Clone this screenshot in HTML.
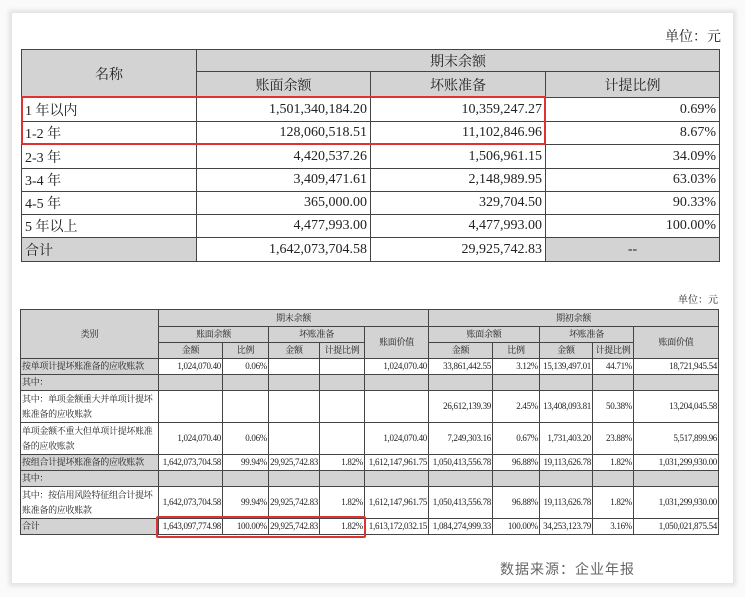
<!DOCTYPE html>
<html><head><meta charset="utf-8"><style>
html,body{margin:0;padding:0;width:745px;height:597px;background:#fafafa;overflow:hidden}
.card{position:absolute;left:12px;top:13px;width:721px;height:570px;background:#fff;box-shadow:0 0 4px 3px #e2e2e2}
.f{font-family:"Liberation Serif","Noto Serif CJK SC",serif;color:#222}
table{position:absolute;border-collapse:collapse;table-layout:fixed}
td{border:1px solid #444;padding:0 3px;white-space:nowrap;overflow:hidden;box-sizing:border-box}
.g{background:#d3d3d3}
.c{text-align:center}.r{text-align:right}
#t1{left:21px;top:49px;width:698px;font-size:14px}
#t2{left:20px;top:309px;width:698px;font-size:9px;line-height:15px;letter-spacing:-0.3px}
#t2 td{padding:0 1px}
.red{position:absolute;border:2px solid #d33;border-radius:2px}
</style></head><body>
<div class="card"></div>
<div class="f" style="position:absolute;right:24px;top:26px;font-size:14px">单位：元</div>
<table id="t1" class="f">
<colgroup><col style="width:175px"><col style="width:174px"><col style="width:175px"><col style="width:174px"></colgroup>
<tr style="height:22px"><td class="g c" rowspan="2">名称</td><td class="g c" colspan="3">期末余额</td></tr>
<tr style="height:26px"><td class="g c">账面余额</td><td class="g c">坏账准备</td><td class="g c">计提比例</td></tr>
<tr style="height:24px"><td>1 年以内</td><td class="r">1,501,340,184.20</td><td class="r">10,359,247.27</td><td class="r">0.69%</td></tr>
<tr style="height:23px"><td>1-2 年</td><td class="r">128,060,518.51</td><td class="r">11,102,846.96</td><td class="r">8.67%</td></tr>
<tr style="height:24px"><td>2-3 年</td><td class="r">4,420,537.26</td><td class="r">1,506,961.15</td><td class="r">34.09%</td></tr>
<tr style="height:23px"><td>3-4 年</td><td class="r">3,409,471.61</td><td class="r">2,148,989.95</td><td class="r">63.03%</td></tr>
<tr style="height:23px"><td>4-5 年</td><td class="r">365,000.00</td><td class="r">329,704.50</td><td class="r">90.33%</td></tr>
<tr style="height:23px"><td>5 年以上</td><td class="r">4,477,993.00</td><td class="r">4,477,993.00</td><td class="r">100.00%</td></tr>
<tr style="height:24px"><td class="g">合计</td><td class="r">1,642,073,704.58</td><td class="r">29,925,742.83</td><td class="g c">--</td></tr>
</table>
<div class="red" style="left:21px;top:96px;width:521px;height:45px"></div>
<div class="f" style="position:absolute;right:27px;top:291px;font-size:10px">单位：元</div>
<table id="t2" class="f">
<colgroup><col style="width:138px"><col style="width:64px"><col style="width:46px"><col style="width:51px"><col style="width:45px"><col style="width:64px"><col style="width:64px"><col style="width:47px"><col style="width:53px"><col style="width:41px"><col style="width:85px"></colgroup>
<tr style="height:17px"><td class="g c" rowspan="3">类别</td><td class="g c" colspan="5">期末余额</td><td class="g c" colspan="5">期初余额</td></tr>
<tr style="height:16px"><td class="g c" colspan="2">账面余额</td><td class="g c" colspan="2">坏账准备</td><td class="g c" rowspan="2">账面价值</td><td class="g c" colspan="2">账面余额</td><td class="g c" colspan="2">坏账准备</td><td class="g c" rowspan="2">账面价值</td></tr>
<tr style="height:15px"><td class="g c">金额</td><td class="g c">比例</td><td class="g c">金额</td><td class="g c">计提比例</td><td class="g c">金额</td><td class="g c">比例</td><td class="g c">金额</td><td class="g c">计提比例</td></tr>
<tr style="height:16px"><td class="g">按单项计提坏账准备的应收账款</td><td class="r">1,024,070.40</td><td class="r">0.06%</td><td></td><td></td><td class="r">1,024,070.40</td><td class="r">33,861,442.55</td><td class="r">3.12%</td><td class="r">15,139,497.01</td><td class="r">44.71%</td><td class="r">18,721,945.54</td></tr>
<tr style="height:16px"><td class="g">其中：</td><td class="g"></td><td class="g"></td><td class="g"></td><td class="g"></td><td class="g"></td><td class="g"></td><td class="g"></td><td class="g"></td><td class="g"></td><td class="g"></td></tr>
<tr style="height:32px"><td style="white-space:normal">其中：单项金额重大并单项计提坏账准备的应收账款</td><td></td><td></td><td></td><td></td><td></td><td class="r">26,612,139.39</td><td class="r">2.45%</td><td class="r">13,408,093.81</td><td class="r">50.38%</td><td class="r">13,204,045.58</td></tr>
<tr style="height:32px"><td style="white-space:normal">单项金额不重大但单项计提坏账准备的应收账款</td><td class="r">1,024,070.40</td><td class="r">0.06%</td><td></td><td></td><td class="r">1,024,070.40</td><td class="r">7,249,303.16</td><td class="r">0.67%</td><td class="r">1,731,403.20</td><td class="r">23.88%</td><td class="r">5,517,899.96</td></tr>
<tr style="height:16px"><td class="g">按组合计提坏账准备的应收账款</td><td class="r">1,642,073,704.58</td><td class="r">99.94%</td><td class="r">29,925,742.83</td><td class="r">1.82%</td><td class="r">1,612,147,961.75</td><td class="r">1,050,413,556.78</td><td class="r">96.88%</td><td class="r">19,113,626.78</td><td class="r">1.82%</td><td class="r">1,031,299,930.00</td></tr>
<tr style="height:16px"><td class="g">其中：</td><td class="g"></td><td class="g"></td><td class="g"></td><td class="g"></td><td class="g"></td><td class="g"></td><td class="g"></td><td class="g"></td><td class="g"></td><td class="g"></td></tr>
<tr style="height:32px"><td style="white-space:normal">其中：按信用风险特征组合计提坏账准备的应收账款</td><td class="r">1,642,073,704.58</td><td class="r">99.94%</td><td class="r">29,925,742.83</td><td class="r">1.82%</td><td class="r">1,612,147,961.75</td><td class="r">1,050,413,556.78</td><td class="r">96.88%</td><td class="r">19,113,626.78</td><td class="r">1.82%</td><td class="r">1,031,299,930.00</td></tr>
<tr style="height:16px"><td class="g">合计</td><td class="r">1,643,097,774.98</td><td class="r">100.00%</td><td class="r">29,925,742.83</td><td class="r">1.82%</td><td class="r">1,613,172,032.15</td><td class="r">1,084,274,999.33</td><td class="r">100.00%</td><td class="r">34,253,123.79</td><td class="r">3.16%</td><td class="r">1,050,021,875.54</td></tr>
</table>
<div class="red" style="left:156px;top:516px;width:206px;height:18px"></div>
<div style="position:absolute;left:500px;top:559px;font-family:'Liberation Sans','Noto Sans CJK SC',sans-serif;font-size:14px;letter-spacing:1px;color:#666">数据来源：企业年报</div>
</body></html>
